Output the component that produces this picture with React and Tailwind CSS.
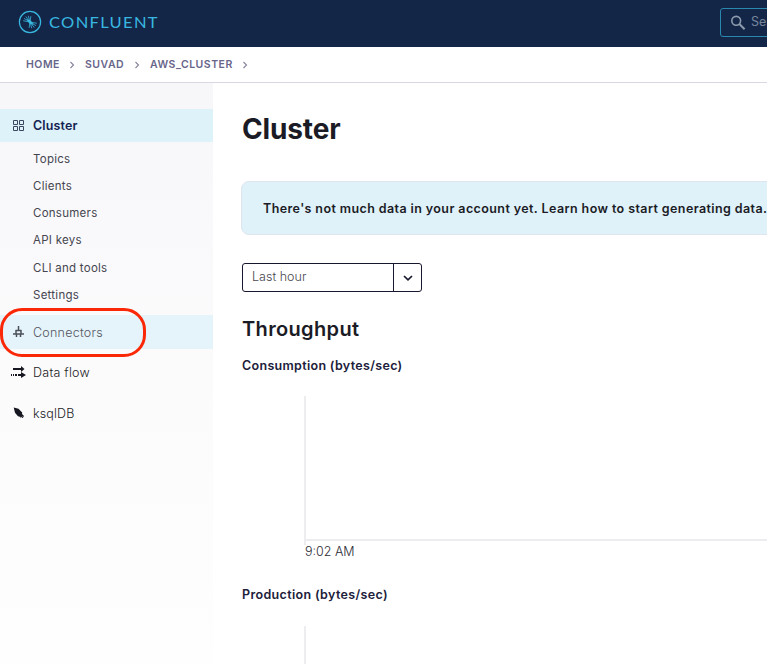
import React from 'react';

const subItems = ['Topics', 'Clients', 'Consumers', 'API keys', 'CLI and tools', 'Settings'];

function Logo() {
  return (
    <svg className="h-6 w-6 shrink-0" viewBox="0 0 24 24" fill="none" stroke="#38b8e0">
      <circle cx="12" cy="12" r="10.6" strokeWidth="1.2" />
      <g strokeWidth="0.8" strokeLinecap="round">
        <path d="M12 12 5.6 10.8M12 12 6.4 8.6M12 12 8 6.8M12 12 10.4 6.2M12 12 12.8 6.6" />
        <path d="M12 12 18.4 13.2M12 12 17.6 15.4M12 12 16 17.2M12 12 13.6 17.8M12 12 11.2 17.4" />
      </g>
      <path d="M8.5 9 13 10.8 15.5 15 11 13.2Z" fill="#38b8e0" stroke="none" />
    </svg>
  );
}

function Crumb({ children, className }) {
  return (
    <span className={`flex items-center ${className}`}>
      <span className="flex-1 whitespace-nowrap">{children}</span>
      <svg className="h-2 w-1.5" viewBox="0 0 6 8" fill="none" stroke="#85829b" strokeWidth="1.1">
        <path d="M1.5 1 4.5 4 1.5 7" />
      </svg>
    </span>
  );
}

function ChartLines({ className }) {
  return (
    <div className={`ml-[62px] border-l-2 border-[#ededf0] ${className}`}>
      <div className="h-[145px] border-b-2 border-[#ededf0]" />
    </div>
  );
}

export default function App() {
  return (
    <div className="flex h-[664px] w-[767px] flex-col overflow-hidden bg-white font-['Inter','Liberation_Sans',sans-serif] text-[#1b1b25]">
      <header className="flex h-[47px] shrink-0 items-start bg-[#142647] pl-[18px]">
        <div className="mt-[10px] flex items-center">
          <Logo />
          <span className="ml-[7px] w-[109px] origin-left scale-x-[1.1] font-['Lato',sans-serif] text-[15px] leading-6 tracking-[1.2px] text-[#38b8e0]">CONFLUENT</span>
        </div>
        <div className="ml-[562px] mt-2 flex h-[29px] w-[180px] shrink-0 items-center rounded-[3px] border border-[#2a87ad] pl-[9px] text-[12.5px] text-[#75869c]">
          <svg className="h-4 w-4" viewBox="0 0 16 16" fill="none" stroke="#8c9bad" strokeWidth="1.6">
            <circle cx="6.2" cy="5.8" r="4.4" />
            <path d="M9.4 9 14.6 14.2" strokeWidth="2" />
          </svg>
          <span className="ml-[5px]">Search</span>
        </div>
      </header>
      <nav className="flex h-9 shrink-0 items-center border-b border-[#d8d7e3] pl-[26px] text-[10.5px] font-semibold tracking-[0.5px] text-[#68658a]">
        <Crumb className="w-[49px]">HOME</Crumb>
        <Crumb className="ml-[10px] w-[55px]">SUVAD</Crumb>
        <Crumb className="ml-[10px] w-[98px]">AWS_CLUSTER</Crumb>
      </nav>
      <div className="flex min-h-0 flex-1">
        <aside className="w-[213px] shrink-0 bg-linear-to-b from-[#f7f7fa] via-[#fbfbfc] to-[#fefefe] pt-[26px] text-[12.5px]">
          <div className="flex h-[33px] items-center bg-[#def2fa] pl-[13px] font-semibold tracking-[0.12px] text-[#142350]">
            <svg className="mr-2 h-3 w-3" viewBox="0 0 12 12" fill="none" stroke="#3c465c">
              <path d="M.5 .5h4v4h-4zM6.5 .5h4v4h-4zM.5 6.5h4v4h-4zM6.5 6.5h4v4h-4z" />
            </svg>
            <span className="pt-0.5">Cluster</span>
          </div>
          <ul className="h-[167px] pl-[33px] pt-[3.85px] text-[11.5px] tracking-[0.26px] text-[#45454f]">
            {subItems.map((item) => (
              <li key={item} className="flex h-[27.2px] items-center">{item}</li>
            ))}
          </ul>
          <div className="relative mt-[6px] flex h-[34px] items-center bg-[#e4f4fa] pl-[13px] font-light tracking-[0.25px] text-[#55555e]">
            <svg className="mr-2 h-3 w-3" viewBox="0 0 12 12" fill="none" stroke="#4d5058" strokeWidth="1.5">
              <path d="M5.5 0v4M2.5 4.5h6M0 8h11M3 4v4M8 4v4M3.5 8v3M7.5 8v3" />
            </svg>
            <span className="pt-[3px]">Connectors</span>
            <div className="absolute left-0 -top-[7px] h-[49px] w-[146px] rounded-[22px] border-3 border-[#fb2808]" />
          </div>
          <div className="mt-[6px] flex h-[34px] items-center pl-[11px] font-light tracking-[0.26px] text-[#1b1b25]">
            <svg className="mr-[7px] h-3 w-[15px]" viewBox="0 0 15 12" fill="#171721">
              <path d="M2 2h8V0L13.5 3 10 6V4H2zM7 8h3V6L15 9l-5 3v-2H7zM0 8h1v2H0zM2 8h1v2H2zM4 8h2v2H4z" />
            </svg>
            <span className="pt-0.5">Data flow</span>
          </div>
          <div className="mt-[7px] flex h-[34px] items-center pl-[13px] font-light tracking-[0.15px] text-[#1b1b25]">
            <svg className="mr-2 h-3 w-3" viewBox="0 0 12 12" fill="#171721">
              <path d="M.7 .4 5.5 1.7 9.2 5.5 9 6.9 10.8 8.7V10L8.8 8.9l1.6 1.7-1 .4L7.7 9.6 8 11 6 9.2 5.2 9.6 2 5.8Z" />
            </svg>
            <span className="pt-0.5">ksqlDB</span>
          </div>
        </aside>
        <main className="min-w-0 flex-1 overflow-hidden pl-[29px] pt-[28px]">
          <h1 className="text-[28px] font-bold leading-9 tracking-[-0.15px]">Cluster</h1>
          <div className="-ml-px mt-[34px] flex h-[54px] w-[560px] items-center rounded-lg border border-[#dfe5ee] bg-[#dff2fa] pl-[21px] pt-[3px] text-[12.5px] font-semibold tracking-[0.4px] whitespace-nowrap">
            There's not much data in your account yet. Learn how to start generating data.
          </div>
          <div className="mt-[28px] flex h-[29px] w-[180px] rounded-[3px] border border-[#17172d] text-[12.5px] text-[#606068]">
            <span className="flex w-[150px] shrink-0 items-center pb-px pl-[9px] font-light tracking-[0.02px] text-[#484850]">Last hour</span>
            <span className="flex flex-1 items-center justify-center border-l border-[#17172d]">
              <svg className="h-2 w-3" viewBox="0 0 12 8" fill="none" stroke="#17172d" strokeWidth="1.7">
                <path d="M2 2 6 5.8 10 2" />
              </svg>
            </span>
          </div>
          <h2 className="mt-[23px] text-[20px] font-semibold leading-7 tracking-[0.35px]">Throughput</h2>
          <h3 className="mt-[13px] text-[12.5px] font-semibold leading-5 tracking-[0.31px] text-[#20203a]">Consumption (bytes/sec)</h3>
          <ChartLines className="mt-5 h-[149px]" />
          <p className="-mt-[3px] ml-[63px] text-[12.5px] font-light leading-5 text-[#2b2b33]">9:02 AM</p>
          <h3 className="mt-[23px] text-[12.5px] font-semibold leading-5 tracking-[0.34px] text-[#20203a]">Production (bytes/sec)</h3>
          <ChartLines className="mt-[21px] h-[149px]" />
        </main>
      </div>
    </div>
  );
}
